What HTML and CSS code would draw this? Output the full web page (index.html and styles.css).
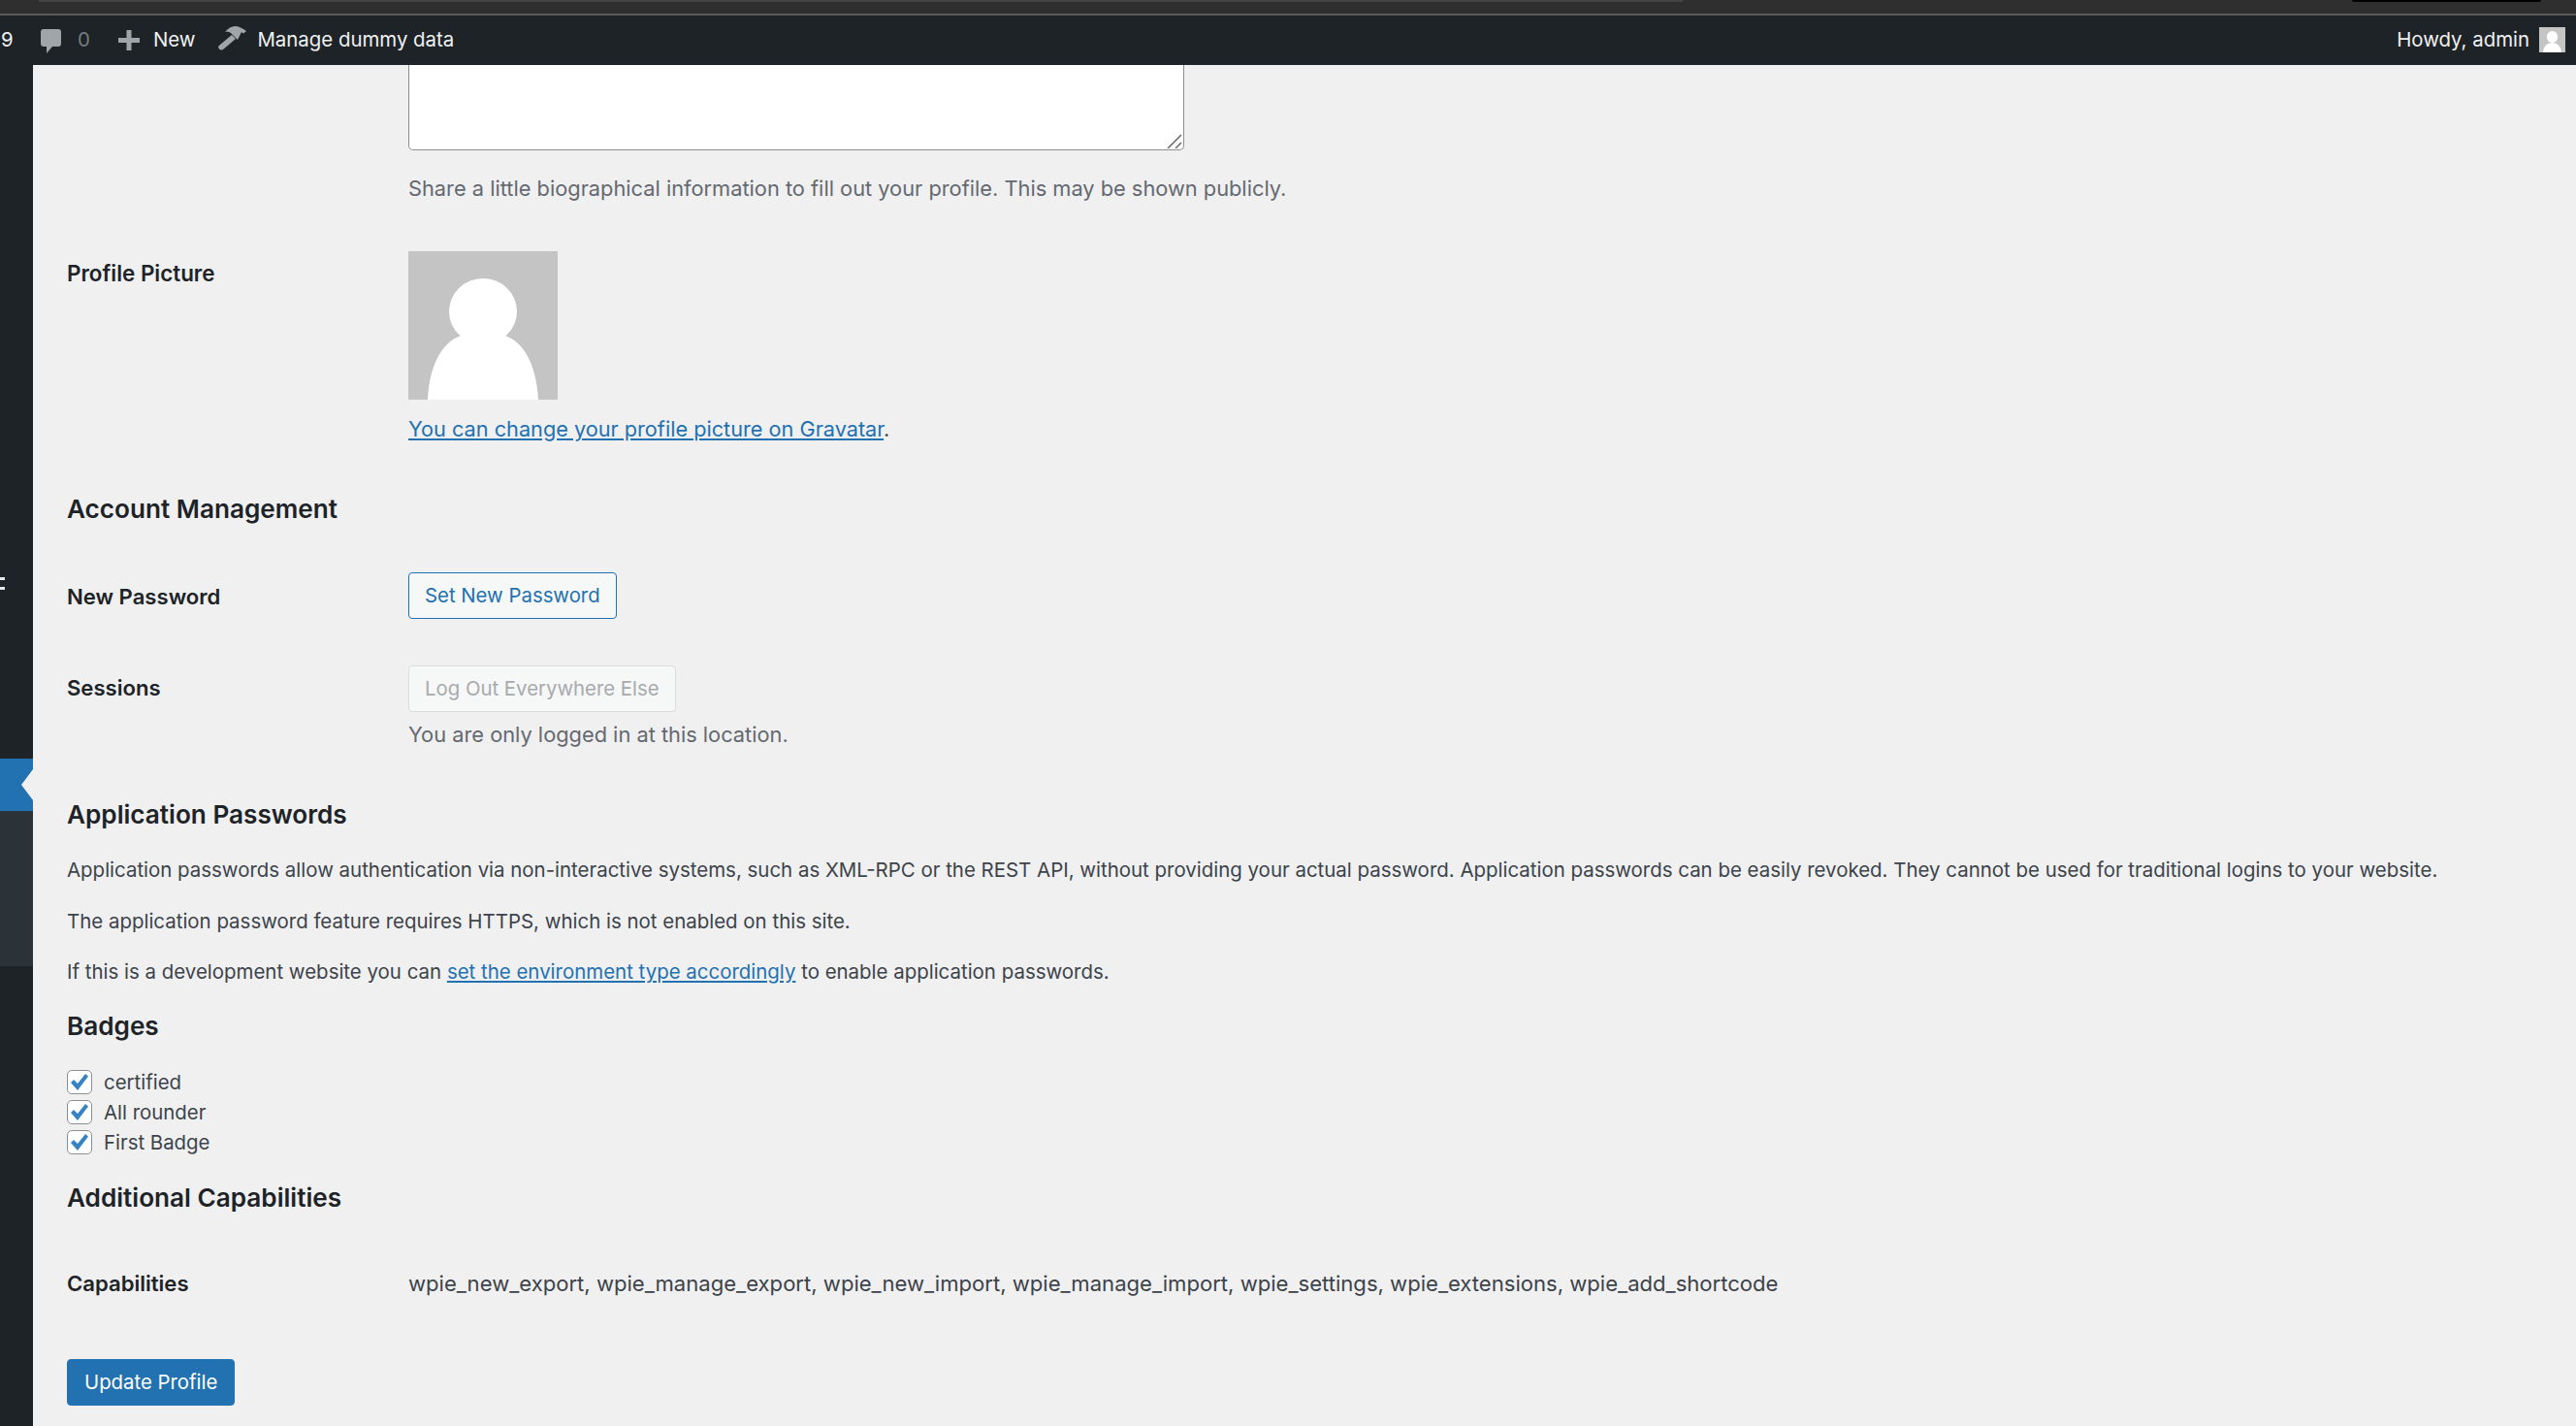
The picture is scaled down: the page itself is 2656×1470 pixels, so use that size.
FILE: index.html
```html
<!DOCTYPE html>
<html lang="en">
<head>
<meta charset="utf-8">
<title>Profile</title>
<link rel="stylesheet" href="styles.css">
</head>
<body>
<div class="chrome"><div class="chrome-tab"></div><div class="chrome-notch"></div></div>
<header class="adminbar">
  <div class="bar-left">
    <span class="bar-count">9</span>
    <span class="bar-item comments">
      <svg class="ico" width="21" height="25" viewBox="0 0 21 25"><path d="M3 0h15a3 3 0 0 1 3 3v12a3 3 0 0 1-3 3h-6l-6 7v-7H3a3 3 0 0 1-3-3V3a3 3 0 0 1 3-3z"/></svg>
      <span class="muted">0</span>
    </span>
    <span class="bar-item new">
      <svg class="ico" width="22" height="21" viewBox="0 0 22 21"><path d="M8.500 0h5v8H22v5h-8.500v8h-5v-8H0V8h8.500z"/></svg>
      <span>New</span>
    </span>
    <span class="bar-item dummy">
      <svg class="ico" width="29" height="25" viewBox="0 0 29 25"><path d="M14 9l4 4L5 24c-1.500 1-3 .5-4-.5s-1.200-2.500-.2-3.500z"/><path d="M7 6C10 2 14 0 17 0c4 0 8 2 12 5l-3 2.500-2-1.500-4 8-7-7-2-1c-1-.5-3-.5-4 0z"/></svg>
      <span>Manage dummy data</span>
    </span>
  </div>
  <div class="bar-right">
    <span>Howdy, admin</span>
    <svg class="mini-avatar" width="27" height="26" viewBox="0 0 26 26" preserveAspectRatio="none"><rect width="26" height="26" fill="#c4c4c4"/><ellipse cx="13" cy="10" rx="5.500" ry="6" fill="#fff"/><path d="M4 26c0-6 4-10 9-10s9 4 9 10z" fill="#fff"/></svg>
  </div>
</header>
<div class="layout">
  <aside class="sidebar">
    <span class="side-glyph"></span>
    <div class="side-current"></div>
    <div class="side-sub"></div>
  </aside>
  <main class="content">
    <div class="row bio">
      <div class="label"></div>
      <div class="field">
        <div class="textarea"><svg class="grip" width="16" height="15" viewBox="0 0 16 15"><path d="M1 15L15 1M9 15l6-6" stroke="#666" stroke-width="1.500" fill="none"/></svg></div>
        <p class="desc">Share a little biographical information to fill out your profile. This may be shown publicly.</p>
      </div>
    </div>
    <div class="row picture">
      <div class="label strong">Profile Picture</div>
      <div class="field">
        <svg class="avatar" width="154" height="153" viewBox="0 0 154 153"><rect width="154" height="153" fill="#c4c4c4"/><ellipse cx="77" cy="62" rx="35" ry="34" fill="#fff"/><path d="M20 153c2-40 18-63 38-67 6 4 32 4 38 0 20 4 36 27 38 67z" fill="#fff"/></svg>
        <p class="pic-link"><a href="#">You can change your profile picture on Gravatar</a>.</p>
      </div>
    </div>
    <h2 class="h-account">Account Management</h2>
    <div class="row pw">
      <div class="label strong">New Password</div>
      <div class="field"><button class="btn btn-outline">Set New Password</button></div>
    </div>
    <div class="row sessions">
      <div class="label strong">Sessions</div>
      <div class="field">
        <button class="btn btn-disabled">Log Out Everywhere Else</button>
        <p class="desc only">You are only logged in at this location.</p>
      </div>
    </div>
    <h2 class="h-app">Application Passwords</h2>
    <p class="para">Application passwords allow authentication via non-interactive systems, such as XML-RPC or the REST API, without providing your actual password. Application passwords can be easily revoked. They cannot be used for traditional logins to your website.</p>
    <p class="para">The application password feature requires HTTPS, which is not enabled on this site.</p>
    <p class="para">If this is a development website you can <a href="#">set the environment type accordingly</a> to enable application passwords.</p>
    <h2 class="h-badges">Badges</h2>
    <ul class="badges">
      <li><span class="check"><svg width="18" height="17" viewBox="0 0 18 17"><path d="M0 9l3-3 4 4 8-10 3 2.500-11 14.500z" fill="#3582c4"/></svg></span>certified</li>
      <li><span class="check"><svg width="18" height="17" viewBox="0 0 18 17"><path d="M0 9l3-3 4 4 8-10 3 2.500-11 14.500z" fill="#3582c4"/></svg></span>All rounder</li>
      <li><span class="check"><svg width="18" height="17" viewBox="0 0 18 17"><path d="M0 9l3-3 4 4 8-10 3 2.500-11 14.500z" fill="#3582c4"/></svg></span>First Badge</li>
    </ul>
    <h2 class="h-add">Additional Capabilities</h2>
    <div class="row caps">
      <div class="label strong">Capabilities</div>
      <div class="field">wpie_new_export, wpie_manage_export, wpie_new_import, wpie_manage_import, wpie_settings, wpie_extensions, wpie_add_shortcode</div>
    </div>
    <button class="btn btn-primary">Update Profile</button>
  </main>
</div>
</body>
</html>
```
FILE: styles.css
```css
* { box-sizing: border-box; }
html, body { margin: 0; padding: 0; height: 100%; overflow: hidden; }
body { background: #f0f0f1; font-family: Inter, "Liberation Sans", sans-serif; font-size: 22px; line-height: 30px; color: #3c434a; display: flex; flex-direction: column; }
p, h2, ul { margin: 0; padding: 0; }
a { color: #2271b1; }

.chrome { height: 16px; background: #2f2f2f; border-bottom: 2px solid #5a5a5a; position: relative; flex: none; }
.chrome-tab { height: 2px; width: 1695px; background: #444; margin-left: 40px; }
.chrome-notch { position: absolute; top: 0; left: 2425px; width: 195px; height: 2px; background: #000; border-radius: 0 0 6px 6px; }

.adminbar { height: 51px; flex: none; background: #1d2327; color: #f0f0f1; display: flex; justify-content: space-between; align-items: center; padding: 0 11px 1px 0; font-size: 20.400px; }
.bar-left, .bar-right, .bar-item { display: flex; align-items: center; }
.bar-count { margin-left: 1px; width: 41px; }
.ico { fill: #a0a5aa; flex: none; }
.comments { gap: 17px; margin-right: 29px; }
.comments .ico { margin-top: 3px; }
.muted { color: #787c82; }
.new { gap: 14px; margin-right: 24px; }
.dummy { gap: 11px; }
.dummy .ico { margin-top: -4px; }
.bar-right { gap: 10px; }

.layout { flex: 1; display: flex; min-height: 0; }
.sidebar { width: 34px; flex: none; background: #1d2327; display: flex; flex-direction: column; position: relative; }
.side-glyph { position: absolute; top: 528px; left: 0; width: 5px; height: 13px; border-top: 3px solid #e8e8e8; border-bottom: 3px solid #e8e8e8; }
.side-current { margin-top: 715px; height: 54px; background: #2271b1; position: relative; }
.side-current::after { content: ""; position: absolute; right: 0; top: 11px; border: 16px solid transparent; border-left: 0; border-right: 12px solid #f0f0f1; }
.side-sub { height: 160px; background: #2c3338; }

.content { flex: 1; min-width: 0; padding-left: 35px; }
.row { display: flex; }
.label { width: 352px; flex: none; }
.strong { font-weight: 600; color: #1d2327; font-size: 22.100px; }
.field { flex: 1; min-width: 0; }
.textarea { width: 800px; height: 88px; background: #fff; border: 1px solid #8c8f94; border-top: 0; border-radius: 0 0 5px 5px; position: relative; }
.grip { position: absolute; right: 1px; bottom: 1px; }
.desc { color: #646970; font-size: 21.800px; }
.bio .desc { margin-top: 24px; }
.picture { margin-top: 50px; }
.picture .label { padding-top: 8px; font-size: 22.400px; }
.avatar { display: block; }
.pic-link { margin-top: 15px; font-size: 21.700px; }
h2 { font-size: 26.150px; line-height: 34px; font-weight: 600; color: #1d2327; }
.h-account { margin-top: 51px; }
.pw { margin-top: 48px; align-items: center; }
.pw .label { padding-top: 2px; }
.sessions { margin-top: 48px; }
.sessions .label { padding-top: 8px; }
.only { margin-top: 8px; }
.btn { font: inherit; font-size: 20.350px; height: 48px; padding: 0 16px; border-radius: 4px; display: block; }
.btn-outline { background: #f6f7f7; border: 1px solid #2271b1; color: #2271b1; }
.btn-disabled { background: #f6f7f7; border: 1px solid #dcdcde; color: #a7aaad; }
.h-app { margin-top: 51px; }
.para { margin-top: 22.500px; color: #3c434a; white-space: nowrap; font-size: 20.440px; }
.h-app + .para { margin-top: 25px; }
.h-badges { margin-top: 23.500px; }
.badges { list-style: none; margin-top: 25.500px; font-size: 20.400px; }
.badges li { display: flex; align-items: center; gap: 12px; height: 31px; }
.check { width: 26px; height: 25px; background: #fff; border: 1px solid #8c8f94; border-radius: 5px; display: flex; align-items: center; justify-content: center; flex: none; }
.h-add { margin-top: 25px; }
.caps { margin-top: 56px; color: #3c434a; font-size: 22.080px; }
.btn-primary { margin-top: 63px; padding: 0 17px; background: #2271b1; border: 1px solid #2271b1; color: #fff; }
```
